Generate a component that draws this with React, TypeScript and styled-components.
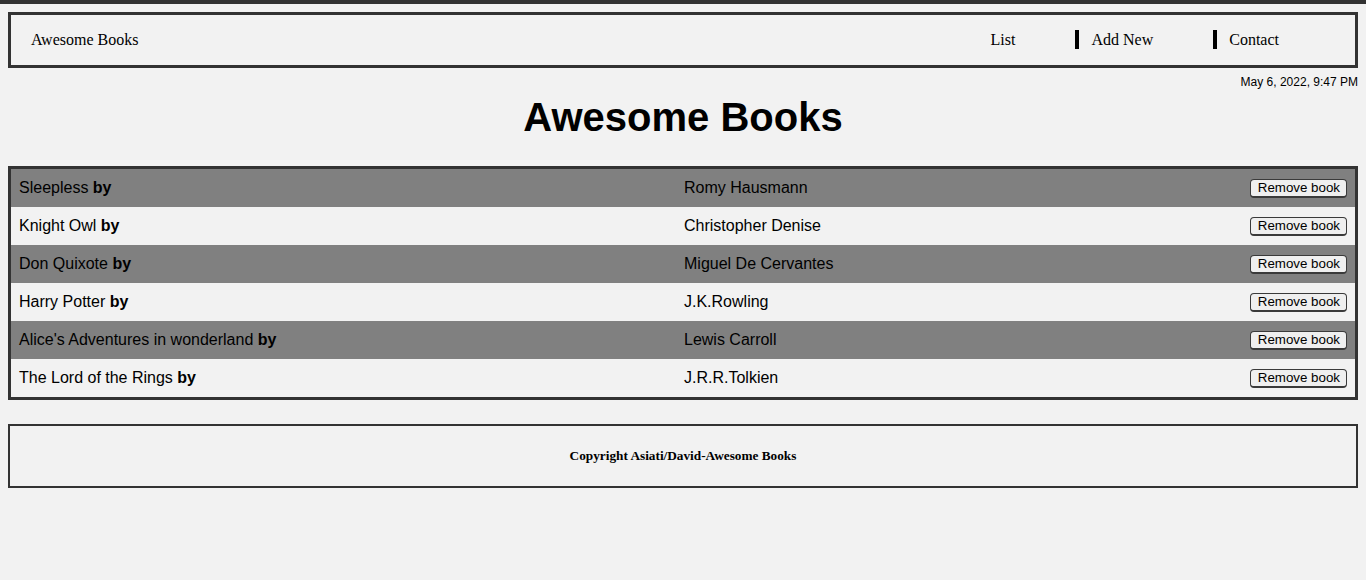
import React from "react";
import styled, { createGlobalStyle } from "styled-components";

const GlobalStyle = createGlobalStyle`
  html {
    border-top: 4px solid #333;
    background: #f2f2f2;
  }
  body {
    margin: 8px;
    background: #f2f2f2;
    font-family: "Liberation Serif", "Times New Roman", serif;
    color: #000;
  }
`;

const Nav = styled.nav`
  display: flex;
  align-items: center;
  justify-content: space-between;
  box-sizing: border-box;
  height: 56px;
  border: 3px solid #333;
  padding: 0 0 2px 20px;
  font-family: "Liberation Serif", serif;
  font-size: 16px;
`;

const Brand = styled.span`
  line-height: 19px;
`;

const Links = styled.ul`
  display: flex;
  list-style: none;
  margin: 0 16px 0 0;
  padding: 0;
`;

const LinkItem = styled.li<{ $sep?: boolean }>`
  line-height: 19px;
  padding: 0 60px 0 12px;
  border-left: 4px solid ${(p) => (p.$sep ? "#000" : "transparent")};
`;

const DateLine = styled.p`
  margin: 7px 0 0;
  text-align: right;
  font-family: "Liberation Sans", Arial, sans-serif;
  font-size: 12px;
  line-height: 14px;
`;

const Title = styled.h1`
  margin: 5px 0 26px;
  text-align: center;
  font-family: "Liberation Sans", Arial, sans-serif;
  font-size: 40px;
  line-height: 46px;
  font-weight: 700;
`;

const BookList = styled.ul`
  list-style: none;
  margin: 0;
  padding: 0;
  border: 3px solid #333;
`;

const Row = styled.li<{ $dark?: boolean }>`
  display: grid;
  grid-template-columns: calc(50% + 1px) 1fr auto;
  align-items: center;
  height: 38px;
  padding: 0 8px;
  background: ${(p) => (p.$dark ? "#808080" : "#f2f2f2")};
  font-family: "Liberation Sans", Arial, sans-serif;
  font-size: 16px;
`;

const Cell = styled.span`
  white-space: nowrap;
`;

const RemoveButton = styled.button`
  box-sizing: border-box;
  height: 19px;
  font-family: "Liberation Sans", Arial, sans-serif;
  font-size: 13.33px;
  line-height: 15px;
  padding: 0 6px 0 7px;
  background: #efefef;
  color: #000;
  border: 1px solid #3a3a3a;
  border-bottom-width: 2px;
  border-radius: 4px;
`;

const Footer = styled.footer`
  display: flex;
  align-items: center;
  justify-content: center;
  margin-top: 24px;
  height: 60px;
  border: 2px solid #333;
`;

const FooterText = styled.h5`
  margin: 0;
  font-family: "Liberation Serif", serif;
  font-size: 13.28px;
  font-weight: 700;
`;

const books = [
  ["Sleepless", "Romy Hausmann"],
  ["Knight Owl", "Christopher Denise"],
  ["Don Quixote", "Miguel De Cervantes"],
  ["Harry Potter", "J.K.Rowling"],
  ["Alice's Adventures in wonderland", "Lewis Carroll"],
  ["The Lord of the Rings", "J.R.R.Tolkien"],
];

export default function App() {
  return (
    <>
      <GlobalStyle />
      <Nav>
        <Brand>Awesome Books</Brand>
        <Links>
          <LinkItem>List</LinkItem>
          <LinkItem $sep>Add New</LinkItem>
          <LinkItem $sep>Contact</LinkItem>
        </Links>
      </Nav>
      <DateLine>May 6, 2022, 9:47 PM</DateLine>
      <Title>Awesome Books</Title>
      <BookList>
        {books.map(([title, author], i) => (
          <Row key={title} $dark={i % 2 === 0}>
            <Cell>
              {title} <b>by</b>
            </Cell>
            <Cell>{author}</Cell>
            <RemoveButton>Remove book</RemoveButton>
          </Row>
        ))}
      </BookList>
      <Footer>
        <FooterText>Copyright Asiati/David-Awesome Books</FooterText>
      </Footer>
    </>
  );
}
